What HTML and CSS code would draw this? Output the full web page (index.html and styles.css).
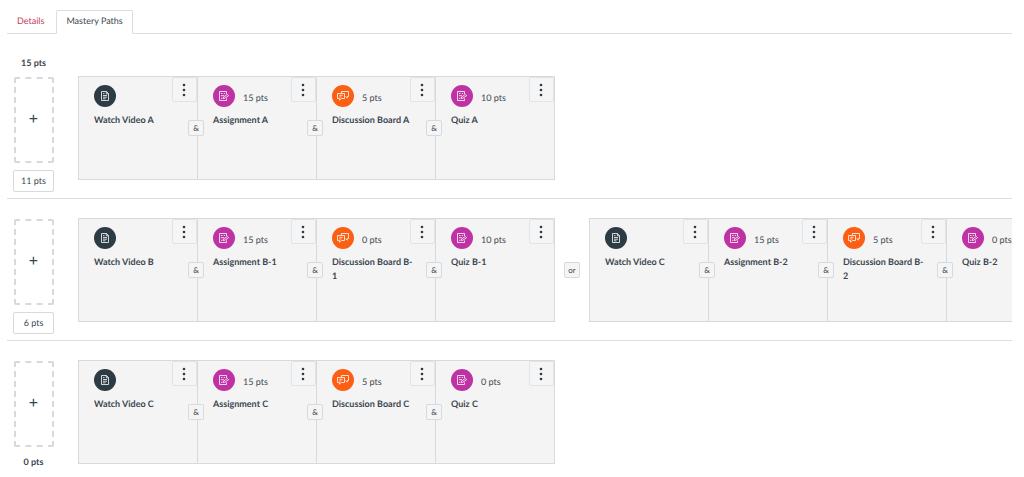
FILE: index.html
```html
<!doctype html>
<html lang="en">
<head>
<meta charset="utf-8">
<title>Mastery Paths</title>
<meta name="viewport" content="width=device-width, initial-scale=1">
<link rel="stylesheet" href="styles.css">
</head>
<body>
<svg class="sprite" aria-hidden="true">
  <symbol id="i-page" viewBox="0 0 22 22">
    <path d="M7.500 6.500h5l2 2v7h-7z M12.300 6.500v2.300h2.200 M9 10.500h4 M9 12.200h4 M9 13.800h2.500 M9 8.600h1.500"/>
  </symbol>
  <symbol id="i-assignment" viewBox="0 0 22 22">
    <path d="M13.500 9V6.500h-7v9h7v-2 M8 8.500h1.500 M10.800 8.500h1.300 M8 10.700h3 M8 13.300h1.500 M10.300 13.500l.4-1.600 3.700-2.500 1.200 1.300-3.700 2.500z"/>
  </symbol>
  <symbol id="i-discussion" viewBox="0 0 22 22">
    <path d="M9.500 8V6.500h7v5h-1.300v1.700l-1.700-1.700 M5.500 8.500h7v5H9.300l-1.800 1.700v-1.700h-2z M7.300 10.300h3.300 M7.300 11.900h2"/>
  </symbol>
  <symbol id="i-more" viewBox="0 0 4 14">
    <circle cx="2" cy="2" r="1.300"/><circle cx="2" cy="7" r="1.300"/><circle cx="2" cy="12" r="1.300"/>
  </symbol>
</svg>

<nav class="tabs">
  <a class="tab" href="#details">Details</a>
  <a class="tab active" href="#paths">Mastery Paths</a>
</nav>

<main id="paths">
  <section class="range">
    <div class="score">
      <div class="bound top">15 pts</div>
      <button class="add" aria-label="Add item">+</button>
      <button class="cutoff">11 pts</button>
    </div>
    <div class="sets">
      <div class="set">
        <div class="card">
          <div class="info"><svg class="icon page"><use href="#i-page"/></svg></div>
          <div class="name">Watch Video A</div>
          <button class="more" aria-label="Options"><svg><use href="#i-more"/></svg></button>
          <button class="join">&amp;</button>
        </div>
        <div class="card">
          <div class="info"><svg class="icon assignment"><use href="#i-assignment"/></svg><span>15 pts</span></div>
          <div class="name">Assignment A</div>
          <button class="more" aria-label="Options"><svg><use href="#i-more"/></svg></button>
          <button class="join">&amp;</button>
        </div>
        <div class="card">
          <div class="info"><svg class="icon discussion"><use href="#i-discussion"/></svg><span>5 pts</span></div>
          <div class="name">Discussion Board A</div>
          <button class="more" aria-label="Options"><svg><use href="#i-more"/></svg></button>
          <button class="join">&amp;</button>
        </div>
        <div class="card">
          <div class="info"><svg class="icon assignment"><use href="#i-assignment"/></svg><span>10 pts</span></div>
          <div class="name">Quiz A</div>
          <button class="more" aria-label="Options"><svg><use href="#i-more"/></svg></button>
        </div>
      </div>
    </div>
  </section>

  <section class="range">
    <div class="score">
      <button class="add" aria-label="Add item">+</button>
      <button class="cutoff">6 pts</button>
    </div>
    <div class="sets">
      <div class="set">
        <div class="card">
          <div class="info"><svg class="icon page"><use href="#i-page"/></svg></div>
          <div class="name">Watch Video B</div>
          <button class="more" aria-label="Options"><svg><use href="#i-more"/></svg></button>
          <button class="join">&amp;</button>
        </div>
        <div class="card">
          <div class="info"><svg class="icon assignment"><use href="#i-assignment"/></svg><span>15 pts</span></div>
          <div class="name">Assignment B-1</div>
          <button class="more" aria-label="Options"><svg><use href="#i-more"/></svg></button>
          <button class="join">&amp;</button>
        </div>
        <div class="card">
          <div class="info"><svg class="icon discussion"><use href="#i-discussion"/></svg><span>0 pts</span></div>
          <div class="name">Discussion Board B-1</div>
          <button class="more" aria-label="Options"><svg><use href="#i-more"/></svg></button>
          <button class="join">&amp;</button>
        </div>
        <div class="card">
          <div class="info"><svg class="icon assignment"><use href="#i-assignment"/></svg><span>10 pts</span></div>
          <div class="name">Quiz B-1</div>
          <button class="more" aria-label="Options"><svg><use href="#i-more"/></svg></button>
        </div>
      </div>
      <button class="split">or</button>
      <div class="set">
        <div class="card">
          <div class="info"><svg class="icon page"><use href="#i-page"/></svg></div>
          <div class="name">Watch Video C</div>
          <button class="more" aria-label="Options"><svg><use href="#i-more"/></svg></button>
          <button class="join">&amp;</button>
        </div>
        <div class="card">
          <div class="info"><svg class="icon assignment"><use href="#i-assignment"/></svg><span>15 pts</span></div>
          <div class="name">Assignment B-2</div>
          <button class="more" aria-label="Options"><svg><use href="#i-more"/></svg></button>
          <button class="join">&amp;</button>
        </div>
        <div class="card">
          <div class="info"><svg class="icon discussion"><use href="#i-discussion"/></svg><span>5 pts</span></div>
          <div class="name">Discussion Board B-2</div>
          <button class="more" aria-label="Options"><svg><use href="#i-more"/></svg></button>
          <button class="join">&amp;</button>
        </div>
        <div class="card">
          <div class="info"><svg class="icon assignment"><use href="#i-assignment"/></svg><span>0 pts</span></div>
          <div class="name">Quiz B-2</div>
          <button class="more" aria-label="Options"><svg><use href="#i-more"/></svg></button>
        </div>
      </div>
    </div>
  </section>

  <section class="range">
    <div class="score">
      <button class="add" aria-label="Add item">+</button>
      <div class="bound bottom">0 pts</div>
    </div>
    <div class="sets">
      <div class="set">
        <div class="card">
          <div class="info"><svg class="icon page"><use href="#i-page"/></svg></div>
          <div class="name">Watch Video C</div>
          <button class="more" aria-label="Options"><svg><use href="#i-more"/></svg></button>
          <button class="join">&amp;</button>
        </div>
        <div class="card">
          <div class="info"><svg class="icon assignment"><use href="#i-assignment"/></svg><span>15 pts</span></div>
          <div class="name">Assignment C</div>
          <button class="more" aria-label="Options"><svg><use href="#i-more"/></svg></button>
          <button class="join">&amp;</button>
        </div>
        <div class="card">
          <div class="info"><svg class="icon discussion"><use href="#i-discussion"/></svg><span>5 pts</span></div>
          <div class="name">Discussion Board C</div>
          <button class="more" aria-label="Options"><svg><use href="#i-more"/></svg></button>
          <button class="join">&amp;</button>
        </div>
        <div class="card">
          <div class="info"><svg class="icon assignment"><use href="#i-assignment"/></svg><span>0 pts</span></div>
          <div class="name">Quiz C</div>
          <button class="more" aria-label="Options"><svg><use href="#i-more"/></svg></button>
        </div>
      </div>
    </div>
  </section>
</main>
</body>
</html>
```

FILE: styles.css
```css
* {
    box-sizing: border-box;
}
body {
    margin: 0;
    padding: 10px 12px 0 7px;
    background: #fff;
    color: #3a464f;
    font: 9px/14px Lato, sans-serif;
    text-rendering: geometricPrecision;
}
button {
    margin: 0;
    padding: 0;
    font: inherit;
    color: inherit;
    text-rendering: inherit;
    border: 1px solid #d6dadd;
    border-radius: 2px;
    background: #fff;
}
.sprite {
    position: absolute;
    width: 0;
    height: 0;
}

.tabs {
    display: flex;
    height: 24px;
    border-bottom: 1px solid #dcdfe1;
}
.tab {
    height: 24px;
    padding: 3px 9px;
    border: 1px solid transparent;
    color: #c5405c;
    text-decoration: none;
}
.tab.active {
    color: inherit;
    border-color: #dcdfe1;
    border-bottom-color: #fff;
    border-radius: 2px 2px 0 0;
    margin-left: 2px;
    background: #fff;
}

main {
    padding-top: 23px;
}
.range {
    display: flex;
    height: 142px;
    border-bottom: 1px solid #dcdfe1;
}
.range:last-child {
    height: auto;
    border-bottom: 0;
}

/* left column: the score range */
.score {
    flex: none;
    display: flex;
    flex-direction: column;
    align-items: center;
    justify-content: flex-end;
    width: 53px;
    padding-bottom: 6px;
}
.range:last-child .score {
    padding: 20px 0 0;
}
.bound {
    font-weight: bold;
}
.bound.top {
    line-height: 12px;
    margin-bottom: 8px;
}
.bound.bottom {
    margin-top: 8px;
}
.add {
    width: 40px;
    height: 86px;
    padding-bottom: 2px;
    border: 2px dashed #d6dadd;
    font-size: 16px;
}
.cutoff {
    width: 41px;
    height: 22px;
    margin-top: 7px;
}

/* right column: sets of cards */
.sets {
    flex: 1;
    min-width: 0;
    display: flex;
    align-items: flex-start;
    padding: 19px 0 0 18px;
    overflow: hidden;
}
.set {
    flex: none;
    display: flex;
    height: 104px;
    border: 1px solid #d6dadd;
    background: #f4f4f4;
}
.card {
    position: relative;
    width: 119px;
    padding: 8px 18px 8px 15px;
    border-right: 1px solid #d6dadd;
}
.card:last-child {
    width: 118px;
    border-right: 0;
}
.info {
    display: flex;
    align-items: center;
    gap: 8px;
    height: 22px;
}
.info span {
    padding-top: 3px;
}
.icon {
    width: 22px;
    height: 22px;
    border-radius: 50%;
    fill: none;
    stroke: #fff;
    stroke-width: 0.8;
}
.icon.page { background: #2d3b45; }
.icon.assignment { background: #bf32a4; }
.icon.discussion { background: #fc5e13; }
.name {
    margin-top: 6px;
    font-weight: bold;
    word-break: break-all;
}
.more {
    position: absolute;
    top: 0;
    right: 0;
    width: 25px;
    height: 25px;
    border-color: #e1e4e6;
    background: #f5f5f5;
}
.more svg {
    display: block;
    width: 4px;
    height: 14px;
    margin: 0 9px;
    fill: #2d3b45;
}
.join, .split {
    width: 16px;
    height: 16px;
    background: #f5f5f5;
    font-size: 8px;
    line-height: 14px;
}
.join {
    position: absolute;
    top: 43px;
    right: -7px;
    z-index: 1;
}
.split {
    flex: none;
    margin: 44px 9px 0;
}
```
